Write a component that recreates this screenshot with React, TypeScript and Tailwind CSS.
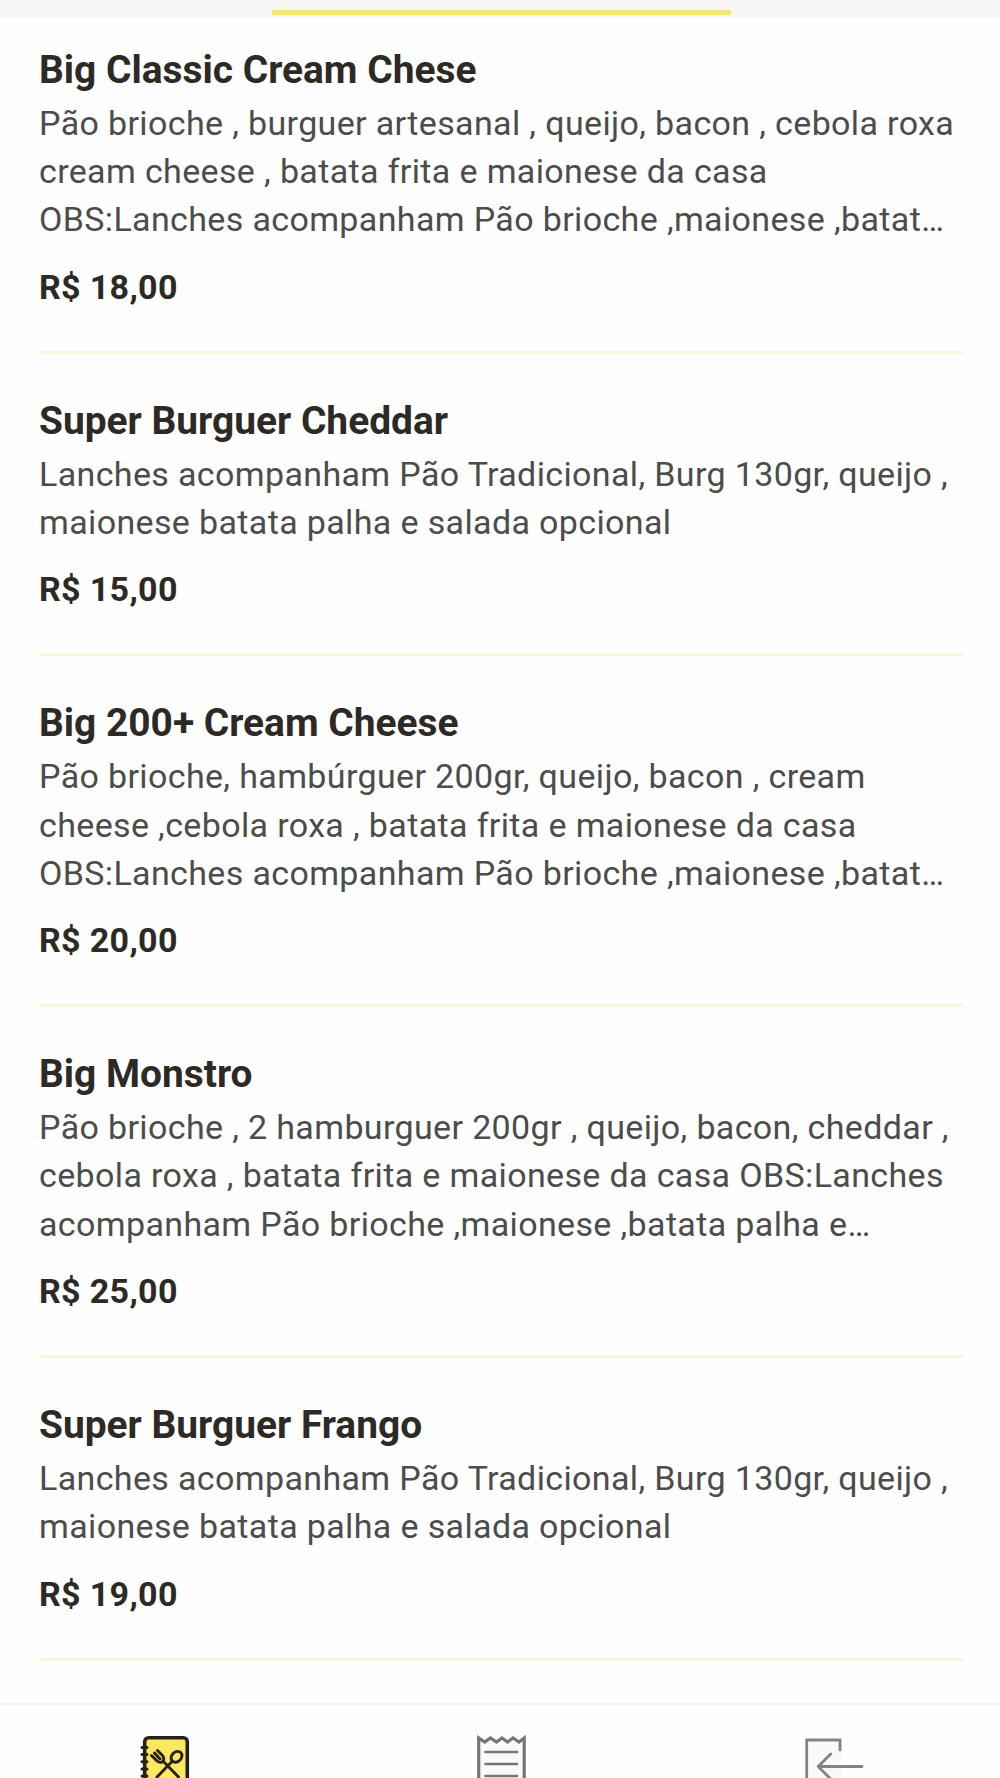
type Product = {
  name: string;
  description: string[];
  price: string;
};

const products: Product[] = [
  {
    name: "Big Classic Cream Chese",
    description: [
      "Pão brioche , burguer artesanal , queijo, bacon , cebola roxa",
      "cream cheese , batata frita e maionese da casa",
      "OBS:Lanches acompanham Pão brioche ,maionese ,batat…",
    ],
    price: "R$ 18,00",
  },
  {
    name: "Super Burguer Cheddar",
    description: [
      "Lanches acompanham Pão Tradicional, Burg 130gr, queijo ,",
      "maionese batata palha e salada opcional",
    ],
    price: "R$ 15,00",
  },
  {
    name: "Big 200+ Cream Cheese",
    description: [
      "Pão brioche, hambúrguer 200gr, queijo, bacon , cream",
      "cheese ,cebola roxa , batata frita e maionese da casa",
      "OBS:Lanches acompanham Pão brioche ,maionese ,batat…",
    ],
    price: "R$ 20,00",
  },
  {
    name: "Big Monstro",
    description: [
      "Pão brioche , 2 hamburguer 200gr , queijo, bacon, cheddar ,",
      "cebola roxa , batata frita e maionese da casa OBS:Lanches",
      "acompanham Pão brioche ,maionese ,batata palha e…",
    ],
    price: "R$ 25,00",
  },
  {
    name: "Super Burguer Frango",
    description: [
      "Lanches acompanham Pão Tradicional, Burg 130gr, queijo ,",
      "maionese batata palha e salada opcional",
    ],
    price: "R$ 19,00",
  },
];

const ProductItem = ({ name, description, price }: Product) => {
  return (
    <li className="border-b-3 border-[#fbf5d9] pt-[45.2px] pb-[43.8px] first:pt-[30.8px]">
      <h2 className="text-[38.9px] leading-[44px] font-bold text-[#2d2a26]">
        {name}
      </h2>
      <p className="mt-[7px] text-[34px] leading-[48.2px] tracking-[0.36px] text-[#4c4c4c]">
        {description.map((line) => (
          <span key={line} className="block whitespace-nowrap">
            {line}
          </span>
        ))}
      </p>
      <p className="mt-[23.3px] text-[34px] leading-[40px] font-bold tracking-[0.33px] text-[#2d2a26]">
        {price}
      </p>
    </li>
  );
};

const MenuIcon = () => (
  <svg
    width="96"
    height="73"
    viewBox="9 15 96 73"
    fill="none"
    stroke="#26221a"
    strokeLinecap="round"
    strokeLinejoin="round"
  >
    <rect x="34.7" y="47.7" width="42.6" height="56" rx="4" fill="#fce761" strokeWidth="3.6" />
    <path d="M32 57.5h5M32 64.5h5M32 71.7h5M32 79h5M32 86h5" strokeWidth="3" />
    {/* Fork */}
    <path
      d="M41.5 65.5l5.5 5.5q3 2.5 6 .5q1.7-3-.5-6l-5-5M44.5 63l5.5 6M53 71l15.5 16"
      strokeWidth="2.9"
    />
    {/* Spoon */}
    <ellipse
      cx="66.5"
      cy="66.8"
      rx="6"
      ry="4.8"
      transform="rotate(-45 66.5 66.8)"
      strokeWidth="2.9"
    />
    <path d="M62.5 71L47 87" strokeWidth="2.9" />
  </svg>
);

const OrdersIcon = () => (
  <svg width="96" height="73" viewBox="2 15 96 73" fill="none" stroke="#777573">
    <path
      d="M28.7 100V48l6 4 5.800-4 6 4 5.500-4 5.500 4 5.500-4 6 4 5.200-4v52"
      fill="#fbf9f8"
      strokeWidth="3.2"
    />
    <path
      d="M35.5 62h31.5M35.5 74h31.5M35.5 86h31.5"
      strokeWidth="2.6"
      strokeLinecap="round"
    />
  </svg>
);

const ExitIcon = () => (
  <svg
    width="96"
    height="73"
    viewBox="5.3 15 96 73"
    fill="none"
    stroke="#858380"
    strokeWidth="2.8"
    strokeLinecap="round"
  >
    <path d="M27 50h35v45H27z" fill="#fbf9f8" stroke="none" />
    <path d="M27 100V50h33.3v10" />
    <path d="M82.3 76.5H38.5M51 64L38.5 76.5 51 89" strokeLinejoin="round" />
  </svg>
);

export default function App() {
  return (
    <div className="flex h-[1778px] w-[1000px] flex-col overflow-hidden bg-[#fefefe] font-[Roboto,sans-serif]">
      {/* Category tabs */}
      <header className="h-[17px] shrink-0 bg-[#f8f6f5] pt-[10px]">
        <div className="ml-[272px] h-[5px] w-[459px] bg-[#f5e573]" />
      </header>

      <main className="min-h-0 flex-1 overflow-hidden pr-[37px] pl-[39px]">
        <ul>
          {products.map((product) => (
            <ProductItem key={product.name} {...product} />
          ))}
        </ul>
      </main>

      {/* Bottom navigation */}
      <nav className="grid h-[75px] shrink-0 grid-cols-3 justify-items-center border-t-2 border-[#f4f4f4]">
        <MenuIcon />
        <OrdersIcon />
        <ExitIcon />
      </nav>
    </div>
  );
}
